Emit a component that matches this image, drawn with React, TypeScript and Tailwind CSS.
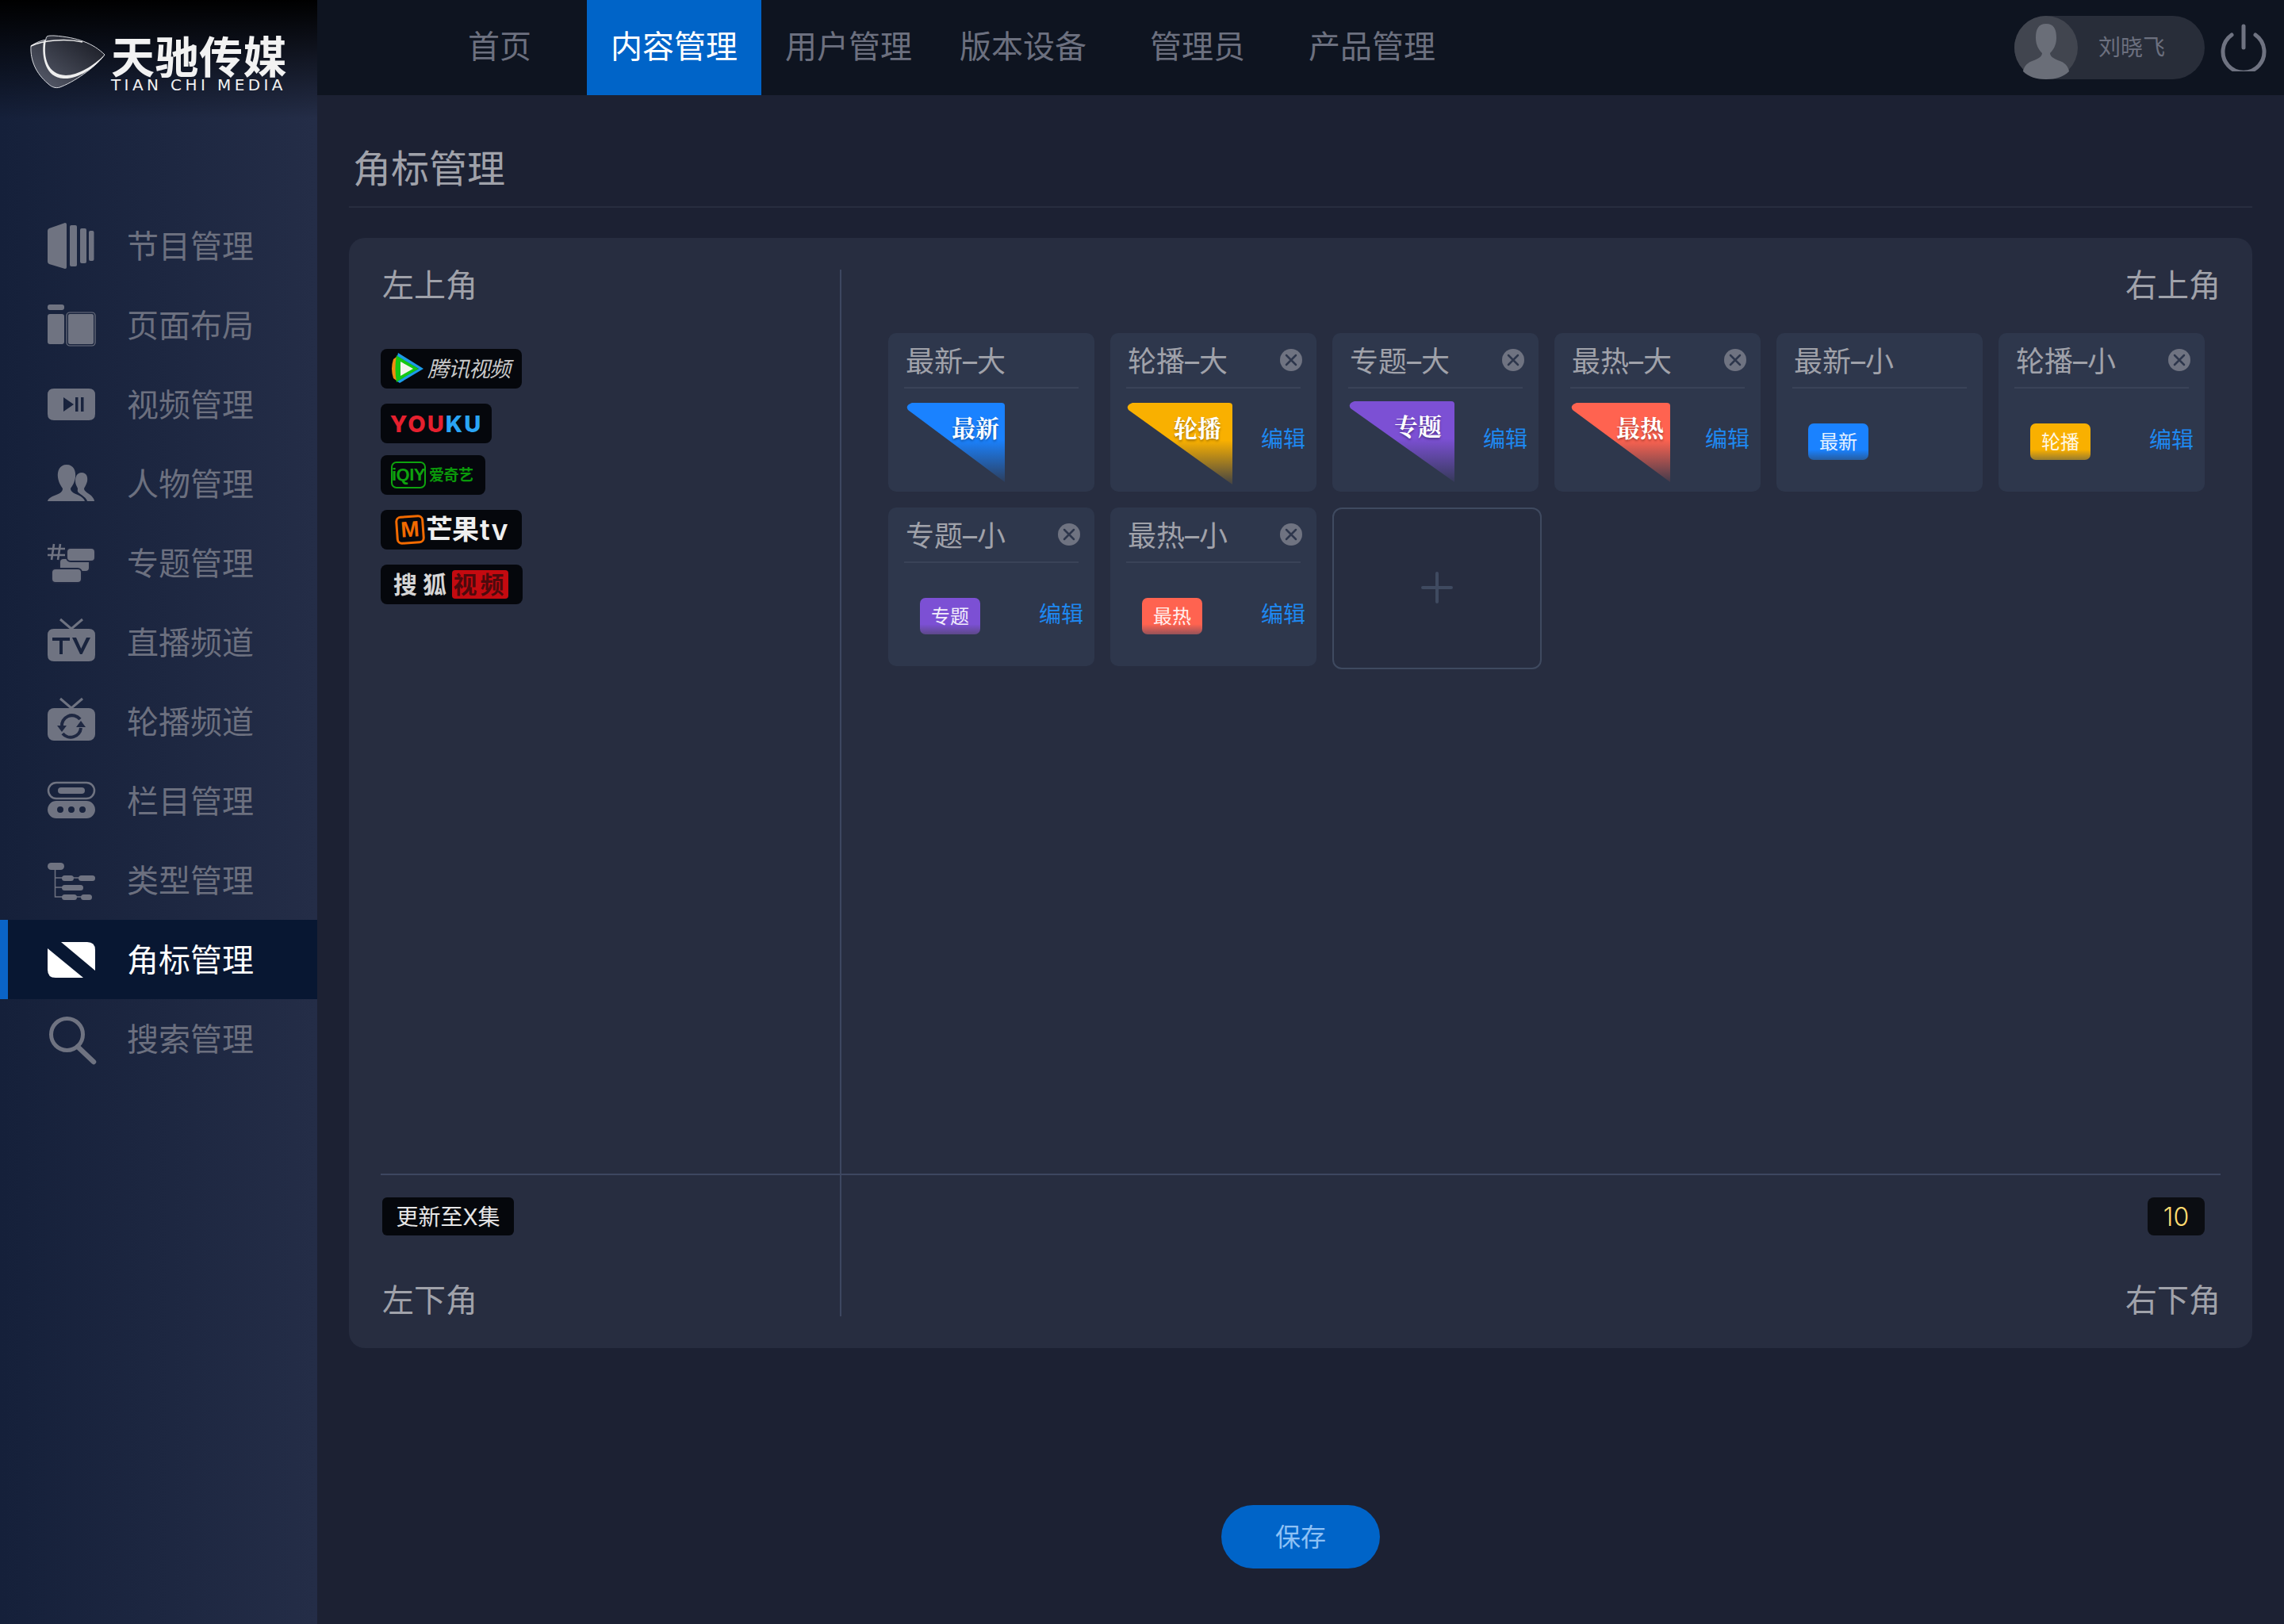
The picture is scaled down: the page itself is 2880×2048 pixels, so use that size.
const cjk = "font-['Inter','Noto_Sans_CJK_SC',sans-serif]";

const Icons: Record<string, JSX.Element> = {
  program: (
    <>
      <path d="M2 8 L22 1 Q24 1 24 3 L24 57 Q24 59 22 59 L2 53 Q0 52 0 50 L0 11 Q0 9 2 8Z" />
      <rect x="28" y="4" width="9" height="52" rx="2" />
      <rect x="41" y="8" width="8" height="44" rx="2" />
      <rect x="52" y="11" width="6.500" height="38" rx="2" />
    </>
  ),
  layout: (
    <>
      <rect x="0" y="4" width="21" height="7" rx="3" />
      <rect x="0" y="16" width="21" height="38" rx="3" />
      <rect x="24" y="14" width="36" height="42" rx="4" fill="none" stroke="#6f7381" strokeWidth="1.200" />
      <rect x="26" y="16" width="32" height="38" rx="2" />
    </>
  ),
  video: (
    <path fillRule="evenodd" d="M8 10 H52 Q60 10 60 18 V42 Q60 50 52 50 H8 Q0 50 0 42 V18 Q0 10 8 10Z M20 21 V39 L33 30Z M35 21 V39 H38.500 V21Z M42 21 V39 H45.500 V21Z" />
  ),
  people: (
    <>
      <path d="M24 6 C33 6 36 14 35 22 C34 29 31 33 29 36 C29 40 33 42 38 44 C43 46 46 49 47 52 H0 C1 48 6 46 11 44 C16 42 19 40 19 36 C17 33 14 29 13 22 C12 14 15 6 24 6Z" />
      <path d="M43 16 C49 16 51 21 50 27 C49 31 47 34 46 36 C46 40 52 42 55 45 C57 47 59 50 59 52 H50 C49 48 44 45 40 42 C37 40 38 38 38 36 C37 33 35 31 35 27 C35 21 37 16 43 16Z" />
    </>
  ),
  topic: (
    <>
      <rect x="15" y="24" width="38" height="17" rx="5" stroke="#1d2640" strokeWidth="2" />
      <rect x="5" y="37" width="38" height="18" rx="5" stroke="#1d2640" strokeWidth="2" />
      <rect x="24" y="11" width="36" height="17" rx="5" stroke="#1d2640" strokeWidth="2" />
      <path d="M8 6 L5 26 M16 6 L13 26 M0 12 H22 M0 20 H22" fill="none" stroke="#6f7381" strokeWidth="2.600" />
    </>
  ),
  tv: (
    <>
      <path d="M16 1 L30 13 L44 1" fill="none" stroke="#6f7381" strokeWidth="3" />
      <path fillRule="evenodd" d="M8 13 H52 Q60 13 60 21 V46 Q60 54 52 54 H8 Q0 54 0 46 V21 Q0 13 8 13Z M6 24 V28 H15 V45 H19 V28 H28 V24Z M31 24 L41 45 H43.500 L54 24 H49 L42.300 38 L36 24Z" />
    </>
  ),
  carousel: (
    <>
      <path d="M16 1 L30 13 L44 1" fill="none" stroke="#6f7381" strokeWidth="3" />
      <rect x="0" y="13" width="60" height="41" rx="8" />
      <path d="M18 37 A13 13 0 0 1 41 27 M42 38 A13 13 0 0 1 19 45" fill="none" stroke="#1f2842" strokeWidth="4" />
      <path d="M12 35 H24 L18 43Z M36 37 L42 29 L48 37Z" fill="#1f2842" />
    </>
  ),
  column: (
    <>
      <rect x="1" y="7" width="58" height="20" rx="10" fill="none" stroke="#6f7381" strokeWidth="2.500" />
      <rect x="13" y="13" width="34" height="8" rx="4" />
      <path fillRule="evenodd" d="M11 30 H49 A11 11 0 0 1 49 52 H11 A11 11 0 0 1 11 30Z M16 37 A4 4 0 1 0 16 45 A4 4 0 1 0 16 37Z M30 37 A4 4 0 1 0 30 45 A4 4 0 1 0 30 37Z M44 37 A4 4 0 1 0 44 45 A4 4 0 1 0 44 37Z" />
    </>
  ),
  genre: (
    <>
      <rect x="0" y="8" width="21" height="9" rx="4.500" />
      <rect x="18" y="24" width="15" height="7" rx="3.500" />
      <rect x="39" y="24" width="21" height="7" rx="3.500" />
      <rect x="18" y="36" width="27" height="7" rx="3.500" />
      <rect x="18" y="48" width="19" height="7" rx="3.500" />
      <rect x="42" y="48" width="14" height="7" rx="3.500" />
      <path d="M9.500 16 V51 H19 M9.500 27 H40 M9.500 39 H19 M36 51 H43" fill="none" stroke="#6f7381" strokeWidth="1.500" />
    </>
  ),
  corner: (
    <>
      <path d="M17 8 H50 Q60 8 60 18 V44Z" />
      <path d="M0 16 L45 53 H10 Q0 53 0 43Z" />
    </>
  ),
  search: (
    <>
      <circle cx="24.500" cy="24.500" r="20" fill="none" stroke="#6f7381" strokeWidth="5" />
      <path d="M38 40 L58 59" fill="none" stroke="#6f7381" strokeWidth="6.500" strokeLinecap="round" />
    </>
  ),
};

const menu = [
  { name: "节目管理", icon: "program" },
  { name: "页面布局", icon: "layout" },
  { name: "视频管理", icon: "video" },
  { name: "人物管理", icon: "people" },
  { name: "专题管理", icon: "topic" },
  { name: "直播频道", icon: "tv" },
  { name: "轮播频道", icon: "carousel" },
  { name: "栏目管理", icon: "column" },
  { name: "类型管理", icon: "genre" },
  { name: "角标管理", icon: "corner", active: true },
  { name: "搜索管理", icon: "search" },
];

const tabs = ["首页", "内容管理", "用户管理", "版本设备", "管理员", "产品管理"];

const cards = [
  { title: "最新–大", label: "最新", color: "blue", big: true, w: 124, h: 100, ml: 23, mt: 18, tr: 7, closable: false },
  { title: "轮播–大", label: "轮播", color: "amber", big: true, w: 133, h: 103, ml: 21, mt: 18, tr: 14, closable: true },
  { title: "专题–大", label: "专题", color: "purple", big: true, w: 133, h: 102, ml: 21, mt: 16, tr: 16, closable: true },
  { title: "最热–大", label: "最热", color: "red", big: true, w: 125, h: 100, ml: 21, mt: 18, tr: 8, closable: true },
  { title: "最新–小", label: "最新", color: "blue", closable: false },
  { title: "轮播–小", label: "轮播", color: "amber", closable: true },
  { title: "专题–小", label: "专题", color: "purple", closable: true },
  { title: "最热–小", label: "最热", color: "red", closable: true },
];

const hexes: Record<string, string> = {
  blue: "#1a82ff",
  amber: "#f9b000",
  purple: "#7c50d4",
  red: "#ff6350",
};

function BigBadge({ label, color, w, h, tr, ml, mt }: { label: string; color: string; w: number; h: number; tr: number; ml: number; mt: number }) {
  const hex = hexes[color];
  const id = "fade-" + color;
  return (
    <div className="relative shrink-0" style={{ width: w, height: h, marginLeft: ml, marginTop: mt }}>
      <svg width={w} height={h} viewBox={`0 0 ${w} ${h}`} className="block">
        <defs>
          <linearGradient id={id} x1="0" y1="0" x2="0" y2="1">
            <stop offset="0.46" stopColor={hex} />
            <stop offset="1" stopColor={hex} stopOpacity="0.1" />
          </linearGradient>
        </defs>
        <path d={`M7 0 H${w - 4} Q${w} 0 ${w} 4 V${h} L2 9 Q-2 3 7 0Z`} fill={`url(#${id})`} />
      </svg>
      <span
        className="absolute top-[12px] font-['Noto_Serif_CJK_SC','Liberation_Serif','Noto_Sans_CJK_SC',serif] text-[30px] leading-[36px] font-bold text-white [text-shadow:0_2px_3px_rgba(0,0,0,0.35)]"
        style={{ right: tr }}
      >
        {label}
      </span>
    </div>
  );
}

function SmallBadge({ label, color }: { label: string; color: string }) {
  const bg: Record<string, string> = {
    blue: "bg-[linear-gradient(to_bottom,#1a82ff_72%,#265da0)]",
    amber: "bg-[linear-gradient(to_bottom,#f9b000_72%,#977b2e)]",
    purple: "bg-[linear-gradient(to_bottom,#7c50d4_72%,#5d4889)]",
    red: "bg-[linear-gradient(to_bottom,#ff6350_72%,#955259)]",
  };
  return (
    <div className={`ml-[40px] mt-[44px] flex h-[46px] w-[76px] shrink-0 items-center justify-center rounded-[7px] pt-[2px] text-[24px] leading-none text-white/90 ${bg[color]}`}>
      {label}
    </div>
  );
}

function CloseDot() {
  return (
    <svg width="28" height="28" viewBox="0 0 28 28" className="-mr-[2px] shrink-0">
      <circle cx="14" cy="14" r="14" fill="#6f7381" />
      <path d="M8 8 L20 20 M20 8 L8 20" stroke="#2e374c" strokeWidth="2.500" strokeLinecap="round" />
    </svg>
  );
}

function Logo() {
  return (
    <div className="flex items-start">
      <svg width="96" height="70" viewBox="0 0 96 70" className="shrink-0">
        <defs>
          <linearGradient id="mark" x1="0" y1="1" x2="1" y2="0">
            <stop offset="0" stopColor="#5b6070" />
            <stop offset="1" stopColor="#15171f" />
          </linearGradient>
        </defs>
        <path d="M1 15 C8 10 15 8 20 7 C20 2 22 2 30 2 C60 4 80 12 94 26 C86 38 60 58 40 66 C34 69 28 68 22 62 C8 50 0 34 1 15Z" fill="url(#mark)" stroke="#d9dbe0" strokeWidth="1" />
        <path d="M1 15 C16 8 44 5 66 10" fill="none" stroke="#eeeeee" strokeWidth="1.500" />
        <path d="M20 7 C16 30 22 51 45 52 C60 52 80 40 94 26 C80 44 60 57 42 56 C20 55 14 30 17 9Z" fill="#eeeeee" />
      </svg>
      <div className="mt-[3px] ml-[6px] flex w-[222px] flex-col">
        <span className="whitespace-nowrap text-[55px] leading-[52px] font-bold tracking-[0.5px] text-[#f2f2f2]">天驰传媒</span>
        <span className="font-['DejaVu_Sans',sans-serif] whitespace-nowrap text-[20px] leading-[18px] tracking-[4.400px] text-[#f2f2f2]">TIAN CHI MEDIA</span>
      </div>
    </div>
  );
}

const logoBox = "flex h-[50px] items-center rounded-[8px] bg-[#05070c]";

function BrandLogos() {
  return (
    <div className="mt-[60px] flex flex-col items-start gap-[19px]">
      <div className={`${logoBox} w-[178px] pl-[12px]`}>
        <svg width="44" height="40" viewBox="0 0 44 40" className="shrink-0">
          <path d="M8 5 L4 8 Q0 20 4 32 L8 35Z" fill="#f08c10" />
          <path d="M8 3 L36 20 L8 37 Q5 20 8 3Z" fill="#14c814" />
          <path d="M10 0 L42 20 L12 38 L9 36 L36 20 L9 4Z" fill="#1d9be8" />
          <path d="M13 11 L29 20 L13 29Z" fill="#f2f5ee" />
        </svg>
        <span className="ml-[3px] whitespace-nowrap text-[27px] leading-none tracking-[-1px] italic text-[#c9c9c9]">腾讯视频</span>
      </div>
      <div className={`${logoBox} w-[140px] justify-center font-['Inter',sans-serif] text-[29px] leading-none font-extrabold tracking-[2px]`}>
        <span className="text-[#e5202e]">YOU</span>
        <span className="text-[#2aa5f5]">KU</span>
      </div>
      <div className={`${logoBox} -mt-[4px] w-[132px] gap-[4px] pl-[13px]`}>
        <span className="flex h-[34px] w-[44px] items-center justify-center rounded-[7px] border-2 border-[#0ea20e] font-['Liberation_Sans',sans-serif] text-[22px] leading-none font-bold tracking-[-0.5px] text-[#0ea20e]">iQIY</span>
        <span className="whitespace-nowrap text-[19px] leading-none font-bold tracking-[-0.5px] text-[#0a990a]">爱奇艺</span>
      </div>
      <div className={`${logoBox} w-[178px] pl-[19px]`}>
        <span className="flex h-[36px] w-[36px] -rotate-[4deg] items-center justify-center rounded-[7px] border-[3px] border-[#f26a00] font-['Liberation_Sans',sans-serif] text-[28px] leading-none font-bold text-[#f26a00]">M</span>
        <span className="ml-[2px] whitespace-nowrap text-[34px] leading-none font-bold tracking-[-1px] text-[#efefef]">芒果</span>
        <span className="ml-[2px] font-['Inter',sans-serif] text-[36px] leading-none font-semibold tracking-[1px] text-[#efefef]">tv</span>
      </div>
      <div className={`${logoBox} w-[179px] pl-[16px]`}>
        <span className="whitespace-nowrap text-[30px] leading-none font-bold tracking-[7px] text-[#d6d6d6]">搜狐</span>
        <span className="flex h-[36px] w-[71px] items-center justify-center rounded-[4px] bg-[#c40a10] text-[30px] leading-none font-bold tracking-[4px] whitespace-nowrap text-[#4c0a0d]">视频</span>
      </div>
    </div>
  );
}

function BadgeCard(card: (typeof cards)[number]) {
  return (
    <div className="flex h-[200px] w-[260px] flex-col rounded-[10px] bg-[#2e374c]">
      <div className="mx-[20px] flex h-[70px] shrink-0 items-center justify-between border-b-2 border-[#3a4358] pl-[2px] pb-[1px]">
        <span className="pt-[5px] text-[36px] leading-none whitespace-nowrap text-[#a0a2aa]">{card.title}</span>
        {card.closable && <CloseDot />}
      </div>
      <div className="flex flex-1 justify-between pr-[14px]">
        {card.big ? (
          <BigBadge label={card.label} color={card.color} w={card.w!} h={card.h!} tr={card.tr!} ml={card.ml!} mt={card.mt!} />
        ) : (
          <SmallBadge label={card.label} color={card.color} />
        )}
        {card.closable && <a className={`${card.big ? "mt-[46px]" : "mt-[47px]"} text-[28px] leading-[36px] text-[#1e88f0]`}>编辑</a>}
      </div>
    </div>
  );
}

export default function App() {
  return (
    <div className={`flex h-[2048px] w-[2880px] overflow-hidden bg-[#1c2133] ${cjk}`}>
      {/* 侧边栏 */}
      <aside className="flex w-[400px] shrink-0 flex-col bg-[linear-gradient(to_right,#15203a,#242d47)]">
        <div className="flex h-[260px] shrink-0 items-start bg-[linear-gradient(to_bottom,#000000,rgba(0,0,0,0)_150px)] pl-[38px] pt-[43px]">
          <Logo />
        </div>
        {menu.map((m) => (
          <div
            key={m.name}
            className={`flex h-[100px] items-center text-[40px] leading-none ${
              m.active
                ? "border-l-[10px] border-[#0a64c8] bg-[#081732] pl-[50px] text-white"
                : "pl-[60px] text-[#6c707f]"
            }`}
          >
            <svg width="60" height="60" viewBox="0 0 60 60" fill={m.active ? "#ffffff" : "#6f7381"} className="shrink-0 overflow-visible">
              {Icons[m.icon]}
            </svg>
            <span className="ml-[40px] pt-[1px]">{m.name}</span>
          </div>
        ))}
      </aside>

      <div className="flex min-w-0 flex-1 flex-col">
        {/* 顶部导航 */}
        <header className="flex h-[120px] shrink-0 items-center bg-[#0e1420] pl-[120px] pr-[22px]">
          {tabs.map((t) => (
            <div
              key={t}
              className={`flex h-[120px] w-[220px] items-center justify-center pb-[2px] text-[40px] leading-none ${
                t === "内容管理" ? "bg-[#0064c8] text-white" : "text-[#6c707f]"
              }`}
            >
              {t}
            </div>
          ))}
          <div className="ml-auto flex h-[80px] w-[240px] items-center rounded-full bg-[#282d39]">
            <svg width="80" height="80" viewBox="0 0 80 80" className="shrink-0">
              <circle cx="40" cy="40" r="40" fill="#41454f" />
              <path d="M40 10 C50 10 53 17 53 28 C53 38 48 44 45 47 C45 52 52 55 60 58 C64 60 68 64 69 70 C62 77 52 80 40 80 C28 80 18 77 11 70 C12 64 16 60 20 58 C28 55 35 52 35 47 C32 44 27 38 27 28 C27 17 30 10 40 10Z" fill="#6a6e78" />
            </svg>
            <span className="ml-[26px] text-[28px] leading-none text-[#6c707f]">刘晓飞</span>
          </div>
          <svg width="58" height="60" viewBox="0 0 58 60" className="ml-[20px] shrink-0">
            <path d="M14 14 A26 26 0 1 0 44 14" fill="none" stroke="#6f7381" strokeWidth="5" strokeLinecap="round" />
            <path d="M29 3 V30" fill="none" stroke="#6f7381" strokeWidth="5" strokeLinecap="round" />
          </svg>
        </header>

        <main className="flex flex-1 flex-col px-[40px]">
          <div className="flex h-[142px] shrink-0 items-center border-b-2 border-[#272d3f] pl-[5px] pt-[46px]">
            <h1 className="text-[48px] leading-none font-normal text-[#a0a2aa]">角标管理</h1>
          </div>

          <section className="mt-[38px] flex h-[1400px] shrink-0 flex-col rounded-[20px] bg-[#272d40] p-[40px]">
            <div className="flex h-[1140px] shrink-0">
              <div className="w-[581px] shrink-0 border-r-2 border-[#3d4760]">
                <div className="pl-[2px] text-[40px] leading-[40px] text-[#a0a2aa]">左上角</div>
                <BrandLogos />
              </div>
              <div className="flex flex-1 flex-col">
                <div className="text-right text-[40px] leading-[40px] text-[#a0a2aa]">右上角</div>
                <div className="mt-[40px] grid grid-cols-[repeat(6,260px)] items-start gap-[20px] pl-[59px]">
                  {cards.map((c) => (
                    <BadgeCard key={c.title} {...c} />
                  ))}
                  <div className="flex h-[204px] w-[264px] items-center justify-center rounded-[12px] border-2 border-[#3f4a60] pb-[2px]">
                    <svg width="40" height="40" viewBox="0 0 40 40">
                      <path d="M20 2 V38 M2 20 H38" stroke="#3f4a60" strokeWidth="4" strokeLinecap="round" />
                    </svg>
                  </div>
                </div>
              </div>
            </div>
            <div className="flex flex-1 border-t-2 border-[#3d4760]">
              <div className="flex w-[581px] shrink-0 flex-col justify-between border-r-2 border-[#3d4760] pt-[28px]">
                <div className="ml-[2px] flex h-[48px] w-[166px] items-center justify-center rounded-[6px] bg-[#05070c] pt-[2px] text-[28px] leading-none whitespace-nowrap text-white/90">
                  更新至X集
                </div>
                <div className="pl-[2px] text-[40px] leading-[40px] text-[#a0a2aa]">左下角</div>
              </div>
              <div className="flex flex-1 flex-col items-end justify-between pt-[28px]">
                <div className="mr-[20px] flex h-[48px] w-[72px] items-center justify-center rounded-[8px] bg-[#0b0d12] pt-[1px] text-[32px] leading-none font-light text-[#ffdc70]">
                  10
                </div>
                <div className="text-[40px] leading-[40px] text-[#a0a2aa]">右下角</div>
              </div>
            </div>
          </section>

          <div className="mt-[198px] flex justify-center">
            <button className="h-[80px] w-[200px] rounded-full bg-[#0064c8] pt-[2px] text-[32px] leading-none text-[#8ec1f5]">保存</button>
          </div>
        </main>
      </div>
    </div>
  );
}
